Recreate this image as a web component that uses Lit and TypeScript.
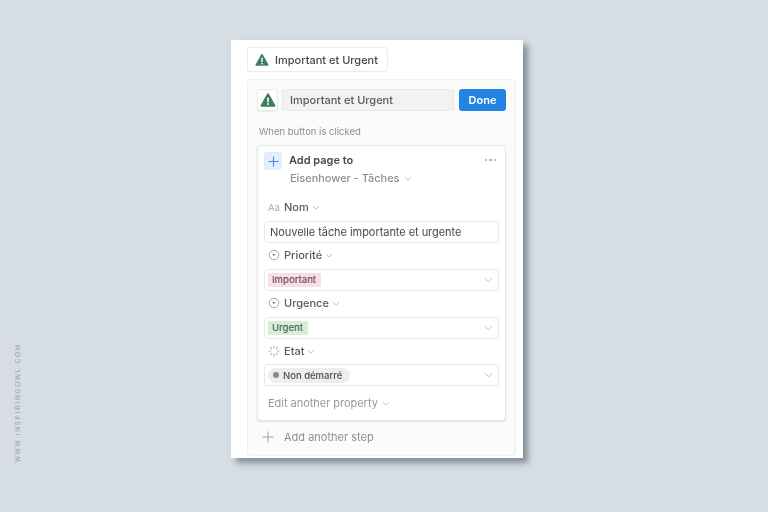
import { LitElement, html, css, svg } from "lit";
import { customElement } from "lit/decorators.js";

const chev = (cls = "chev") => html`<svg class=${cls} viewBox="0 0 10 6" fill="none"><path d="M1 1l4 4 4-4" stroke="currentColor" stroke-width="1"/></svg>`;
const tri = (size: number) => html`<svg width=${size} height=${size} viewBox="0 0 16 16"><path fill-rule="evenodd" fill="#3f7d5f" d="M8 1.2c.4 0 .7.2.9.6l6.4 11.4c.4.7 0 1.5-.8 1.5H1.500c-.8 0-1.200-.8-.8-1.500L7.100 1.800c.2-.4.500-.6.900-.6zM7.200 5.500v4.700h1.600V5.500zM8 11a1 1 0 100 2 1 1 0 000-2z"/></svg>`;
const selectIcon = html`<svg class="pi" viewBox="0 0 12 12" fill="none"><circle cx="6" cy="6" r="4.7" stroke="#a3a3a0" stroke-width="1"/><path d="M4.200 5.100h3.600L6 7.200z" fill="#8a8a87"/></svg>`;
const statusIcon = html`<svg class="pi" viewBox="0 0 12 12" fill="none" stroke="#b0b0ad" stroke-width="1.100" stroke-linecap="round">
  ${[0, 45, 90, 135, 180, 225, 270, 315].map((a) => svg`<path d="M6 1v1.700" transform="rotate(${a} 6 6)"/>`)}
</svg>`;
const plus = (c: string, s: number, w = 1.2) => html`<svg width=${s} height=${s} viewBox="0 0 12 12"><path d="M6 .5v11M.5 6h11" stroke=${c} stroke-width=${w} fill="none"/></svg>`;

@customElement("app-root")
export class AppRoot extends LitElement {
  static styles = css`
    :host { display: block; width: 768px; height: 512px; background: #d6dde5; overflow: hidden; position: relative; font-family: Inter, "Liberation Sans", sans-serif; color: #3f3e3b; }
    .stage { padding: 40px 0 0 231px; }
    .sheet { width: 292px; height: 418px; box-sizing: border-box; background: #fff; box-shadow: 5px 5px 6px rgba(70, 78, 88, .55); padding: 7px 7px 0 16px; filter: blur(.45px); display: flex; flex-direction: column; align-items: flex-start; }
    .chip { width: 141px; height: 25px; box-sizing: border-box; border: 1px solid #ececea; border-radius: 3px; display: flex; align-items: center; gap: 6px; padding-left: 7px; font-size: 11px; font-weight: 500; color: #4a4946; }
    .panel { margin-top: 7px; width: 269px; height: 377px; box-sizing: border-box; background: #fbfbfa; border: 1px solid #f0f0ee; border-radius: 4px; padding: 9px 9px 0; }
    .head { display: flex; gap: 4px; height: 22px; }
    .iconbox { width: 21px; height: 22px; box-sizing: border-box; background: #fff; border: 1px solid #e9e9e7; border-radius: 3px; display: flex; align-items: center; justify-content: center; box-shadow: 0 1px 1px rgba(0,0,0,.06); }
    .name { width: 172px; box-sizing: border-box; background: #f2f2f0; border: 1px solid #e8e8e6; border-radius: 3px; font-size: 11px; line-height: 20px; padding-left: 7px; color: #5c5b58; font-weight: 500; }
    .done { margin-left: 1px; width: 47px; background: #2383e2; color: #fff; border-radius: 3px; font-size: 11px; font-weight: 600; text-align: center; line-height: 22px; }
    .when { font-size: 9.500px; color: #8f8e8a; line-height: 12px; margin: 15px 0 0 2px; }
    .card { margin-top: 7px; width: 249px; height: 276px; box-sizing: border-box; background: #fff; border: 1px solid #e8e8e6; border-radius: 4px; box-shadow: 0 1px 2px rgba(0,0,0,.12); padding: 6px 6px 0; }
    .step { display: flex; gap: 7px; height: 18px; align-items: center; }
    .plusbox { width: 18px; height: 18px; background: #e4eefb; border-radius: 3px; display: flex; align-items: center; justify-content: center; }
    .title { flex: 1; font-size: 11px; font-weight: 600; color: #4a4946; padding-bottom: 2px; }
    .dots { display: flex; gap: 2px; margin-right: 3px; padding-bottom: 2px; }
    .dots i { width: 2.500px; height: 2.500px; border-radius: 50%; background: #a9a9a6; }
    .db { display: flex; align-items: center; gap: 4px; margin: 0 0 0 26px; font-size: 11px; letter-spacing: -.03px; line-height: 16px; color: #8f8e8a; font-weight: 500; }
    .chev { width: 8px; height: 5px; color: #b4b4b2; flex: none; }
    .prop { display: flex; align-items: center; gap: 3px; height: 14px; font-size: 11px; font-weight: 500; color: #5c5b57; padding-left: 4px; }
    .nom { margin-top: 14px; }
    .aa { font-size: 9.500px; color: #a9a9a6; width: 13px; font-weight: 400; }
    .pi { width: 12px; height: 12px; flex: none; margin-right: 1px; }
    .field { width: 235px; height: 22px; box-sizing: border-box; background: #fff; border: 1px solid #e9e9e7; border-radius: 3px; display: flex; align-items: center; justify-content: space-between; padding: 0 5px 0 3px; margin: 7px 0 5px; font-size: 11px; }
    .field.last { margin-top: 6px; }
    .field.text { padding-left: 5px; color: #4a4946; font-weight: 400; letter-spacing: -.05px; }
    .field .chev { width: 9px; height: 6px; }
    .tag { height: 14px; line-height: 14px; border-radius: 2px; padding: 0 5px 0 4px; font-size: 9.500px; font-weight: 500; }
    .pink { background: #f5dfe8; color: #7d4a5f; }
    .green { background: #d9edd9; color: #466b4c; }
    .grey { background: #eeeeec; color: #4d4c49; border-radius: 8px; height: 15px; line-height: 15px; display: flex; align-items: center; gap: 4px; padding: 0 8px 0 5px; }
    .grey i { width: 6px; height: 6px; border-radius: 50%; background: #8b8a87; }
    .edit { display: flex; align-items: center; gap: 4px; margin: 10px 0 0 4px; font-size: 11px; letter-spacing: -.03px; color: #9a9996; line-height: 14px; }
    .another { display: flex; align-items: center; gap: 10px; margin: 9px 0 0 5px; font-size: 11px; color: #8f8e8a; line-height: 14px; }
    .wm { position: absolute; left: 14px; top: 345px; height: 117px; writing-mode: vertical-rl; transform: rotate(180deg); font-size: 6.500px; letter-spacing: 1.700px; color: #979ea7; font-family: "Liberation Sans", sans-serif; white-space: nowrap; }
  `;
  render() {
    return html`
      <div class="stage">
        <div class="sheet">
          <div class="chip">${tri(14)}<span>Important et Urgent</span></div>
          <div class="panel">
            <div class="head">
              <div class="iconbox">${tri(16)}</div>
              <div class="name">Important et Urgent</div>
              <div class="done">Done</div>
            </div>
            <div class="when">When button is clicked</div>
            <div class="card">
              <div class="step">
                <div class="plusbox">${plus("#3f8fe8", 11)}</div>
                <div class="title">Add page to</div>
                <div class="dots"><i></i><i></i><i></i></div>
              </div>
              <div class="db">Eisenhower - Tâches ${chev()}</div>
              <div class="prop nom"><span class="aa">Aa</span>Nom ${chev()}</div>
              <div class="field text">Nouvelle tâche importante et urgente</div>
              <div class="prop">${selectIcon}Priorité ${chev()}</div>
              <div class="field"><span class="tag pink">Important</span>${chev()}</div>
              <div class="prop">${selectIcon}Urgence ${chev()}</div>
              <div class="field"><span class="tag green">Urgent</span>${chev()}</div>
              <div class="prop">${statusIcon}Etat ${chev()}</div>
              <div class="field last"><span class="tag grey"><i></i>Non démarré</span>${chev()}</div>
              <div class="edit">Edit another property ${chev()}</div>
            </div>
            <div class="another">${plus("#a5a5a2", 12, 1)}<span>Add another step</span></div>
          </div>
        </div>
      </div>
      <div class="wm">WWW.INSPIRINGOWL.COM</div>
    `;
  }
}
